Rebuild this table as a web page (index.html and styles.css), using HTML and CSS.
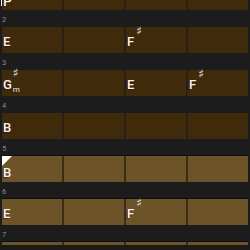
FILE: index.html
```html
<!DOCTYPE html>
<html lang="en">
<head>
  <meta charset="UTF-8">
  <title>Chord Sheet</title>
  <meta name="viewport" content="width=device-width, initial-scale=1.0">
  <link rel="stylesheet" href="styles.css">
</head>
<body>
  <div class="sheet">
    <div class="bars">
      <!-- bar 1 -->
      <div class="bar">
        <div class="num">1</div>
        <div class="cells">
          <div class="cell cursor"><div class="chord"><span class="root">P</span></div></div>
          <div class="cell"></div>
          <div class="cell"></div>
          <div class="cell"></div>
        </div>
      </div>
      <!-- bar 2 -->
      <div class="bar">
        <div class="num">2</div>
        <div class="cells">
          <div class="cell"><div class="chord"><span class="root">E</span></div></div>
          <div class="cell"></div>
          <div class="cell"><div class="chord"><span class="root">F</span><span class="mods"><span class="acc">♯</span></span></div></div>
          <div class="cell"></div>
        </div>
      </div>
      <!-- bar 3 -->
      <div class="bar">
        <div class="num">3</div>
        <div class="cells">
          <div class="cell"><div class="chord"><span class="root">G</span><span class="mods minor"><span class="acc">♯</span><span class="qual">m</span></span></div></div>
          <div class="cell"></div>
          <div class="cell"><div class="chord"><span class="root">E</span></div></div>
          <div class="cell"><div class="chord"><span class="root">F</span><span class="mods"><span class="acc">♯</span></span></div></div>
        </div>
      </div>
      <!-- bar 4 -->
      <div class="bar">
        <div class="num">4</div>
        <div class="cells">
          <div class="cell"><div class="chord"><span class="root">B</span></div></div>
          <div class="cell"></div>
          <div class="cell"></div>
          <div class="cell"></div>
        </div>
      </div>
      <!-- bar 5: selection starts here -->
      <div class="bar">
        <div class="num">5</div>
        <div class="cells light">
          <div class="cell mark"><div class="chord"><span class="root">B</span></div></div>
          <div class="cell"></div>
          <div class="cell"></div>
          <div class="cell"></div>
        </div>
      </div>
      <!-- bar 6 -->
      <div class="bar">
        <div class="num">6</div>
        <div class="cells light">
          <div class="cell"><div class="chord"><span class="root">E</span></div></div>
          <div class="cell"></div>
          <div class="cell"><div class="chord"><span class="root">F</span><span class="mods"><span class="acc">♯</span></span></div></div>
          <div class="cell"></div>
        </div>
      </div>
      <!-- bar 7 -->
      <div class="bar">
        <div class="num">7</div>
        <div class="cells light">
          <div class="cell"></div>
          <div class="cell"></div>
          <div class="cell"></div>
          <div class="cell"></div>
        </div>
      </div>
    </div>
  </div>
</body>
</html>
```

FILE: styles.css
```css
body { margin: 0; background: #1a1a1a; font-family: Roboto, "Noto Sans", sans-serif; }
.sheet { height: 245px; overflow: hidden; background: #1c1c1c; }
.bars { margin-top: -33px; }

.num { height: 17px; box-sizing: border-box; padding: 6px 0 0 2px; font-size: 7.5px; line-height: 7px; color: #8a8a8a; }

.cells { display: grid; grid-template-columns: repeat(4, 60px); gap: 2px; margin: 0 2px; height: 26px; background: #2a1f12; }
.cell { position: relative; background: #3f2a0b; padding: 8px 0 0 1px; box-sizing: border-box; }
.cells.light { background: #3c2d19; box-shadow: 0 -1px 0 #0e0e0e; }
.cells.light .cell { background: #6d5328; }

/* chord label: root letter with stacked accidental / quality */
.chord { display: flex; align-items: flex-start; color: #f4f4f4; text-shadow: -1px 1px 1px rgba(70, 0, 0, 0.6); }
.root { font-size: 13px; line-height: 13px; font-weight: 500; }
.mods { display: flex; flex-direction: column; margin: -9px 0 0 2px; }
.acc { font-family: "DejaVu Sans", sans-serif; font-size: 12px; line-height: 10px; height: 10px; color: #e6e6e6; text-shadow: 0 1px 1px rgba(0, 0, 0, 0.5); }
.mods.minor { margin: -10px 0 0 1px; }
.qual { font-size: 8px; line-height: 8px; margin-top: 8px; }

/* first-beat marker */
.mark { padding-top: 10px; }
.mark::before { content: ''; position: absolute; left: 0; top: 0; border-style: solid; border-width: 10px 10px 0 0; border-color: #fff transparent transparent transparent; }

/* play cursor */
.cursor::before { content: ''; position: absolute; left: -1px; top: 0; bottom: 4px; width: 1px; background: #fff; }
.cursor .chord { padding-top: 3px; }
.cursor .root { font-size: 14px; }
```
